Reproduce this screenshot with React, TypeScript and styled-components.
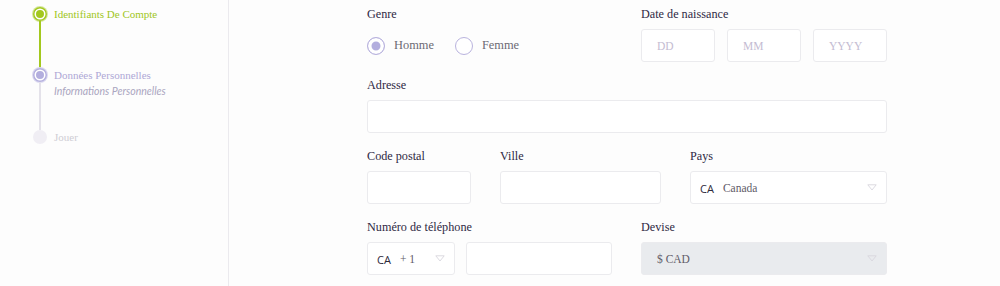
import styled, { createGlobalStyle } from "styled-components";

const serif = `"Liberation Serif", "Times New Roman", Times, serif`;

const GlobalStyle = createGlobalStyle`
  html, body {
    margin: 0;
    padding: 0;
    background: #fdfdfd;
    font-family: ${serif};
  }
  * {
    box-sizing: border-box;
  }
`;

const Page = styled.div`
  display: flex;
  width: 1000px;
  height: 286px;
  overflow: hidden;
`;

const Sidebar = styled.aside`
  width: 229px;
  flex-shrink: 0;
  border-right: 1px solid #ebeaee;
  padding: 7px 0 0 33px;
  display: flex;
  flex-direction: column;
`;

const Step = styled.div<{ $h?: number }>`
  display: flex;
  height: ${(p) => p.$h ?? 61}px;
`;

const Marker = styled.div`
  width: 14px;
  display: flex;
  flex-direction: column;
  align-items: center;
`;

const Dot = styled.div<{ $tone: "done" | "active" | "todo" }>`
  width: 14px;
  height: 14px;
  border-radius: 50%;
  flex-shrink: 0;
  background: ${(p) =>
    p.$tone === "done" ? "#a3c81e" : p.$tone === "active" ? "#b3aede" : "#f0eef4"};
  box-shadow: ${(p) =>
    p.$tone === "done"
      ? "inset 0 0 0 1.5px #a3c81e, inset 0 0 0 3px #fff, 0 0 0 1px #d6e7a0"
      : p.$tone === "active"
      ? "inset 0 0 0 1.5px #b3aede, inset 0 0 0 3px #fff, 0 0 0 1px #dcd9f0"
      : "none"};
`;

const Connector = styled.div<{ $color: string }>`
  width: 1.5px;
  flex: 1;
  background: ${(p) => p.$color};
`;

const StepText = styled.div`
  padding-left: 7px;
  display: flex;
  flex-direction: column;
`;

const StepTitle = styled.span<{ $color: string }>`
  font-size: 11px;
  line-height: 14px;
  color: ${(p) => p.$color};
`;

const StepSub = styled.span`
  margin-top: 3px;
  font-family: Lato, "Open Sans", sans-serif;
  font-style: italic;
  font-size: 10.5px;
  line-height: 12px;
  color: #aaa5c0;
`;

const Main = styled.main`
  padding: 6px 0 0 138px;
  display: flex;
  flex-direction: column;
  gap: 15px;
`;

const Row = styled.div<{ $gap?: number }>`
  display: flex;
  gap: ${(p) => p.$gap ?? 0}px;
`;

const Field = styled.div<{ $w: number }>`
  width: ${(p) => p.$w}px;
  display: flex;
  flex-direction: column;
  gap: 7px;
`;

const Label = styled.label`
  font-size: 12.2px;
  line-height: 16px;
  color: #2f2944;
`;

const Inputs = styled.div<{ $gap: number }>`
  display: flex;
  gap: ${(p) => p.$gap}px;
`;

const Box = styled.div<{ $w?: number; $disabled?: boolean }>`
  width: ${(p) => (p.$w ? `${p.$w}px` : "100%")};
  height: 33px;
  border: 1px solid #ebebee;
  border-radius: 3px;
  background: ${(p) => (p.$disabled ? "#e9ebee" : "#fff")};
  display: flex;
  align-items: center;
  padding: 0 9px 0 15px;
  font-size: 11.5px;
  color: #5e5a66;
  flex-shrink: 0;
`;

const Placeholder = styled.span`
  color: #c4bcd2;
  font-size: 11.5px;
`;

const Code = styled.span`
  font-family: "Open Sans", "Liberation Sans", sans-serif;
  font-size: 11px;
  color: #2d2a3a;
  margin: 2px 9px 0 -6px;
`;

const BoxText = styled.span`
  flex: 1;
  color: #5f5b68;
`;

const Caret = () => (
  <svg width="10" height="7" viewBox="0 0 10 7">
    <path d="M0.8 0.8 H9.2 L5 6 Z" fill="none" stroke="#d8d6de" strokeWidth="0.9" />
  </svg>
);

const Radios = styled.div`
  height: 33px;
  display: flex;
  align-items: center;
  gap: 21px;
`;

const Radio = styled.div`
  display: flex;
  align-items: center;
  gap: 9px;
  font-size: 12.4px;
  color: #6c6a74;
`;

const RadioCircle = styled.span<{ $checked?: boolean }>`
  width: 18px;
  height: 18px;
  border-radius: 50%;
  border: 1px solid #b9b3de;
  background: ${(p) => (p.$checked ? "#b3aede" : "#fff")};
  box-shadow: ${(p) => (p.$checked ? "inset 0 0 0 3.5px #fff" : "none")};
`;

export default function App() {
  return (
    <>
      <GlobalStyle />
      <Page>
        <Sidebar>
          <Step>
            <Marker>
              <Dot $tone="done" />
              <Connector $color="#a3c81e" />
            </Marker>
            <StepText>
              <StepTitle $color="#9fc61c">Identifiants De Compte</StepTitle>
            </StepText>
          </Step>
          <Step $h={62}>
            <Marker>
              <Dot $tone="active" />
              <Connector $color="#e4e2ea" />
            </Marker>
            <StepText>
              <StepTitle $color="#aea8d6">Données Personnelles</StepTitle>
              <StepSub>Informations Personnelles</StepSub>
            </StepText>
          </Step>
          <Step>
            <Marker>
              <Dot $tone="todo" />
            </Marker>
            <StepText>
              <StepTitle $color="#cfcdd4">Jouer</StepTitle>
            </StepText>
          </Step>
        </Sidebar>

        <Main>
          <Row $gap={0}>
            <Field $w={274}>
              <Label>Genre</Label>
              <Radios>
                <Radio>
                  <RadioCircle $checked />
                  Homme
                </Radio>
                <Radio>
                  <RadioCircle />
                  Femme
                </Radio>
              </Radios>
            </Field>
            <Field $w={246}>
              <Label>Date de naissance</Label>
              <Inputs $gap={12}>
                <Box $w={74}>
                  <Placeholder>DD</Placeholder>
                </Box>
                <Box $w={74}>
                  <Placeholder>MM</Placeholder>
                </Box>
                <Box $w={74}>
                  <Placeholder>YYYY</Placeholder>
                </Box>
              </Inputs>
            </Field>
          </Row>

          <Row>
            <Field $w={520}>
              <Label>Adresse</Label>
              <Box />
            </Field>
          </Row>

          <Row $gap={29}>
            <Field $w={104}>
              <Label>Code postal</Label>
              <Box />
            </Field>
            <Field $w={161}>
              <Label>Ville</Label>
              <Box />
            </Field>
            <Field $w={197}>
              <Label>Pays</Label>
              <Box>
                <Code>CA</Code>
                <BoxText>Canada</BoxText>
                <Caret />
              </Box>
            </Field>
          </Row>

          <Row $gap={29}>
            <Field $w={245}>
              <Label>Numéro de téléphone</Label>
              <Inputs $gap={11}>
                <Box $w={88}>
                  <Code>CA</Code>
                  <BoxText>+ 1</BoxText>
                  <Caret />
                </Box>
                <Box $w={146} />
              </Inputs>
            </Field>
            <Field $w={246}>
              <Label>Devise</Label>
              <Box $disabled>
                <BoxText>$ CAD</BoxText>
                <Caret />
              </Box>
            </Field>
          </Row>
        </Main>
      </Page>
    </>
  );
}
